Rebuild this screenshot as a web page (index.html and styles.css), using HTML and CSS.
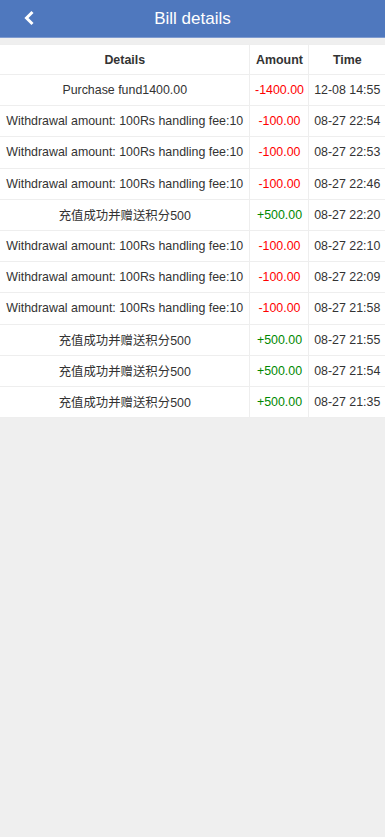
FILE: index.html
```html
<!DOCTYPE html>
<html>
<head>
    <title>Bill details</title>
    <link rel="stylesheet" href="styles.css">
</head>
<body>
    <header class="top-bar">
        <a class="back-link" href="#">
            <svg width="12" height="16" viewBox="0 0 12 16">
                <path d="M9.5 2 L3.5 8 L9.5 14" fill="none" stroke="#fff" stroke-width="3"/>
            </svg>
        </a>
        <h1 class="title">Bill details</h1>
    </header>

    <table class="bill-table">
        <thead>
            <tr>
                <th class="col-details">Details</th>
                <th class="col-amount">Amount</th>
                <th class="col-time">Time</th>
            </tr>
        </thead>
        <tbody>
            <tr><td>Purchase fund1400.00</td><td class="minus">-1400.00</td><td>12-08 14:55</td></tr>
            <tr><td>Withdrawal amount: 100Rs handling fee:10</td><td class="minus">-100.00</td><td>08-27 22:54</td></tr>
            <tr><td>Withdrawal amount: 100Rs handling fee:10</td><td class="minus">-100.00</td><td>08-27 22:53</td></tr>
            <tr><td>Withdrawal amount: 100Rs handling fee:10</td><td class="minus">-100.00</td><td>08-27 22:46</td></tr>
            <tr><td>充值成功并赠送积分500</td><td class="plus">+500.00</td><td>08-27 22:20</td></tr>
            <tr><td>Withdrawal amount: 100Rs handling fee:10</td><td class="minus">-100.00</td><td>08-27 22:10</td></tr>
            <tr><td>Withdrawal amount: 100Rs handling fee:10</td><td class="minus">-100.00</td><td>08-27 22:09</td></tr>
            <tr><td>Withdrawal amount: 100Rs handling fee:10</td><td class="minus">-100.00</td><td>08-27 21:58</td></tr>
            <tr><td>充值成功并赠送积分500</td><td class="plus">+500.00</td><td>08-27 21:55</td></tr>
            <tr><td>充值成功并赠送积分500</td><td class="plus">+500.00</td><td>08-27 21:54</td></tr>
            <tr><td>充值成功并赠送积分500</td><td class="plus">+500.00</td><td>08-27 21:35</td></tr>
        </tbody>
    </table>
</body>
</html>
```

FILE: styles.css
```css
body {
    font-family: "Liberation Sans", Arial, "Noto Sans CJK SC", sans-serif;
    background-color: #efefef;
    margin: 0;
    padding: 0;
}

.top-bar {
    height: 37px;
    background-color: #4f78be;
    border-bottom: 1px solid #7f9bd0;
    display: flex;
    align-items: center;
    justify-content: center;
    position: relative;
    margin-bottom: 6px;
}

.back-link {
    position: absolute;
    left: 23px;
    top: 10px;
    display: flex;
}

.title {
    margin: 0;
    color: #fff;
    font-size: 17px;
    font-weight: normal;
}

.bill-table {
    width: 100%;
    border-collapse: collapse;
    background-color: #fff;
    font-size: 12.4px;
    color: #333;
}

.bill-table th,
.bill-table td {
    border: 1px solid #eee;
    text-align: center;
    white-space: nowrap;
    padding: 0 4px;
    height: 30px;
}

.bill-table tr > :first-child {
    border-left: none;
}

.bill-table tr > :last-child {
    border-right: none;
}

.bill-table th {
    font-weight: bold;
    height: 29px;
}

.bill-table tbody td {
    height: 30.2px;
}

.minus {
    color: #f00;
}

.plus {
    color: #080;
}
```
